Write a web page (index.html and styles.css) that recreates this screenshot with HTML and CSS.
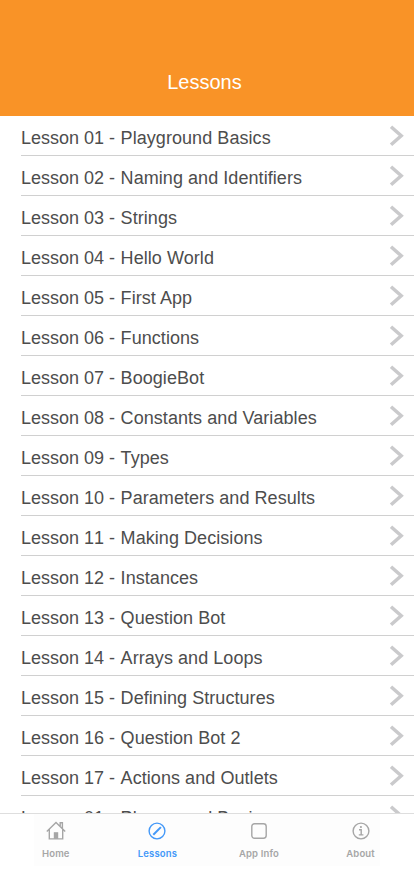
FILE: index.html
```html
<!DOCTYPE html>
<html lang="en">
<head>
<meta charset="utf-8">
<title>Lessons</title>
<link rel="stylesheet" href="styles.css">
</head>
<body>
<svg class="defs" width="0" height="0"><symbol id="chevron" viewBox="0 0 15 22"><path d="M2 1.8L12.2 10.8L2 19.8"/></symbol></svg>
<div class="screen">
<header class="header"><h1>Lessons</h1></header>
<ul class="list">
<li><span class="number">Lesson 01 - </span><span class="name">Playground Basics</span><svg class="chevron"><use href="#chevron"/></svg></li>
<li><span class="number">Lesson 02 - </span><span class="name">Naming and Identifiers</span><svg class="chevron"><use href="#chevron"/></svg></li>
<li><span class="number">Lesson 03 - </span><span class="name">Strings</span><svg class="chevron"><use href="#chevron"/></svg></li>
<li><span class="number">Lesson 04 - </span><span class="name">Hello World</span><svg class="chevron"><use href="#chevron"/></svg></li>
<li><span class="number">Lesson 05 - </span><span class="name">First App</span><svg class="chevron"><use href="#chevron"/></svg></li>
<li><span class="number">Lesson 06 - </span><span class="name">Functions</span><svg class="chevron"><use href="#chevron"/></svg></li>
<li><span class="number">Lesson 07 - </span><span class="name">BoogieBot</span><svg class="chevron"><use href="#chevron"/></svg></li>
<li><span class="number">Lesson 08 - </span><span class="name">Constants and Variables</span><svg class="chevron"><use href="#chevron"/></svg></li>
<li><span class="number">Lesson 09 - </span><span class="name">Types</span><svg class="chevron"><use href="#chevron"/></svg></li>
<li><span class="number">Lesson 10 - </span><span class="name">Parameters and Results</span><svg class="chevron"><use href="#chevron"/></svg></li>
<li><span class="number">Lesson 11 - </span><span class="name">Making Decisions</span><svg class="chevron"><use href="#chevron"/></svg></li>
<li><span class="number">Lesson 12 - </span><span class="name">Instances</span><svg class="chevron"><use href="#chevron"/></svg></li>
<li><span class="number">Lesson 13 - </span><span class="name">Question Bot</span><svg class="chevron"><use href="#chevron"/></svg></li>
<li><span class="number">Lesson 14 - </span><span class="name">Arrays and Loops</span><svg class="chevron"><use href="#chevron"/></svg></li>
<li><span class="number">Lesson 15 - </span><span class="name">Defining Structures</span><svg class="chevron"><use href="#chevron"/></svg></li>
<li><span class="number">Lesson 16 - </span><span class="name">Question Bot 2</span><svg class="chevron"><use href="#chevron"/></svg></li>
<li><span class="number">Lesson 17 - </span><span class="name">Actions and Outlets</span><svg class="chevron"><use href="#chevron"/></svg></li>
<li><span class="number">Lesson 01 - </span><span class="name">Playground Basics</span><svg class="chevron"><use href="#chevron"/></svg></li>
</ul>
<nav class="tabs">
<div class="tabs-inner">
<a class="tab"><svg viewBox="0 0 20 20"><path d="M.8 10.4L10 1.5l9.2 8.9M3.3 8.5v9.4h13.4V8.5M14.2 5V1.7h2.2V7.5"/><path class="solid" d="M7.8 11.2h4.4v6.7H7.8z"/></svg><span>Home</span></a>
<a class="tab active"><svg viewBox="0 0 20 20"><circle cx="10" cy="10" r="7.9"/><path class="needle" d="M6.3 13.7L13.9 6.1"/></svg><span>Lessons</span></a>
<a class="tab"><svg viewBox="0 0 20 20"><rect x="2.8" y="2.8" width="14.4" height="14.4" rx="2.7"/></svg><span>App Info</span></a>
<a class="tab"><svg viewBox="0 0 20 20"><circle cx="10" cy="10" r="7.9"/><path d="M8 8.8h2.2v5M7.8 13.9h4.6"/><circle class="solid" cx="9.9" cy="6" r="1.1"/></svg><span>About</span></a>
</div>
</nav>
</div>
</body>
</html>
```
FILE: styles.css
```css
* { box-sizing: border-box; }
body { margin: 0; background: #fff; font-family: "Liberation Sans", Arial, sans-serif; }
.defs { display: block; }
.screen { display: flex; flex-direction: column; height: 896px; overflow: hidden; }
.header { display: flex; flex: none; justify-content: center; height: 116px; padding-top: 70px; background: #f99327; }
.header h1 { margin: 0; padding-right: 5px; color: #fff; font-size: 20px; font-weight: 400; line-height: 24px; }
.list { flex: none; height: 697px; margin: 0; padding: 0 0 0 21px; overflow: hidden; list-style: none; }
.list li { display: flex; height: 40px; padding-right: 10px; border-bottom: 1px solid #d0d0d0; color: #4d4d4d; font-size: 18px; line-height: 20px; }
.number, .name { padding-top: 12px; white-space: pre; }
.number { flex: none; width: 99.6px; font-kerning: none; }
.name { letter-spacing: .06px; }
.chevron { width: 15px; height: 22px; margin: 9px 0 0 auto; fill: none; stroke: #cacacc; stroke-width: 3.5; }
.tabs { flex: none; height: 83px; border-top: 1px solid #dedede; background: #fff; }
.tabs-inner { display: flex; width: 346px; height: 52px; margin-left: 34px; background: #fdfdfd; }
.tab { display: flex; flex: none; flex-direction: column; align-items: center; width: 101.6px; padding-top: 7px; color: #a6a6a6; font: 600 9.5px/12px Inter, sans-serif; letter-spacing: .15px; }
.tab:first-child { margin-left: -29px; }
.tab svg { width: 20px; height: 20px; fill: none; stroke: currentColor; stroke-width: 1.4; }
.tab span { margin-top: 7px; white-space: nowrap; }
.tab .solid { fill: currentColor; stroke: none; }
.tab .needle { stroke-width: 2; }
.tab.active { color: #4398f8; }
```
